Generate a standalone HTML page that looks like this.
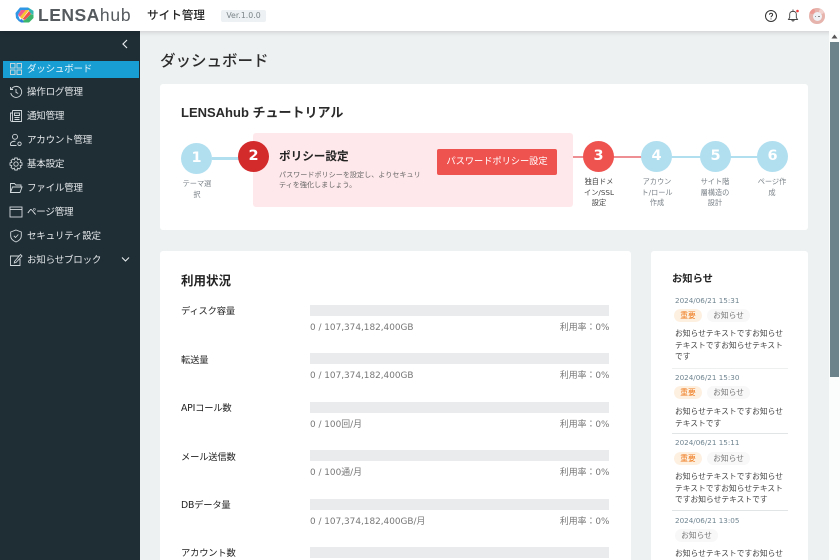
<!DOCTYPE html>
<html lang="ja"><head><meta charset="utf-8"><style>
html,body{margin:0;padding:0;width:840px;height:560px;overflow:hidden;background:#eef1f2}
body{font-family:"DejaVu Sans","Noto Sans CJK JP",sans-serif;color:#222;position:relative}
div,span,svg{position:absolute;white-space:nowrap}
.card{background:#fff;border-radius:3px}
.nav{left:27px;font-size:9.5px;color:#e6eaec;line-height:14px;letter-spacing:-.2px}
.ic{left:9px;width:14px;height:14px;fill:none;stroke:#d3dadd;stroke-width:.9}
.c{width:31px;height:31px;border-radius:50%;text-align:center;line-height:31px;font-weight:bold;font-size:14.5px;color:#fff;background:#b1dff0}
.l{font-size:7.2px;color:#7a8288;line-height:10.6px;text-align:center;white-space:normal;width:40px}
.k{left:181px;font-size:9.3px;line-height:14px;color:#222;letter-spacing:-.2px}
.b{left:310px;width:299px;height:10.5px;background:#e9ebec}
.u{left:310px;font-size:8.9px;line-height:12px;color:#777}
.r{left:509px;width:100.5px;text-align:right;font-size:8.9px;line-height:12px;color:#777}
.d{left:675px;font-size:7.2px;color:#6f8490;line-height:10px}
.t{height:13px;border-radius:7px;font-size:7.75px;line-height:13px;text-align:center}
.o{left:674px;width:28px;background:#fdf0e1;color:#ee7a1d}
.g{width:43px;background:#f8f8f8;color:#777}
.x{left:675px;width:118px;font-size:7.75px;line-height:11.7px;color:#444}
.h{left:672px;width:116px;height:1px;background:#e2e5e6}
</style></head><body>

<div style="left:0;top:31px;width:140px;height:529px;background:#1f2d35"></div>
<div style="left:0;top:0;width:840px;height:31px;background:#fff;box-shadow:0 1px 5px rgba(0,0,0,.16)"></div>

<svg style="left:15px;top:7px" width="19" height="16" viewBox="0 0 19 16">
<path d="M5 0.500H13L18.500 4V6L13 3H6L3 8L5 13L4.500 15L1 11L0.500 6Z" fill="#2f97e6"/>
<path d="M13 0.500L18.500 4V8L15 6Z" fill="#33b7b0"/>
<path d="M6 3H11L5 10L3 8Z" fill="#f25c8a"/>
<path d="M11 3H14L7 12L5 10Z" fill="#f7c52e"/>
<path d="M14 4L16 7L10 13L7.500 12Z" fill="#ef5350"/>
<path d="M16 7L18.500 8V11L14 15.500H6L4.500 14L10 13Z" fill="#3bb56c"/>
<path d="M4 13L7 12L9 15.500H6Z" fill="#2f7fe0"/>
</svg>
<div style="left:38px;top:5px;font-family:'Liberation Sans',sans-serif;font-size:17.5px;line-height:21px;color:#555a5e;font-weight:bold;letter-spacing:.5px">LENSA<span style="position:static;font-weight:normal;letter-spacing:.8px">hub</span></div>
<div style="left:147px;top:7px;font-size:11.6px;line-height:17px;color:#222;font-weight:500;font-family:'Noto Sans CJK JP',sans-serif">サイト管理</div>
<div style="left:221px;top:9.500px;width:45px;height:12px;background:#edf1f3;border-radius:2px;font-size:7.8px;line-height:12px;text-align:center;color:#7c858a">Ver.1.0.0</div>

<svg style="left:764px;top:9px" width="14" height="14" viewBox="0 0 14 14" fill="none" stroke="#333" stroke-width="1"><circle cx="7" cy="7" r="5.500"/><path d="M5.500 5.700C5.500 3.800 8.600 3.800 8.600 5.700C8.600 7 7 6.900 7 8.300M7 9.500V10.400"/></svg>
<svg style="left:786px;top:8px" width="16" height="16" viewBox="0 0 16 16" fill="none" stroke="#444" stroke-width=".9"><path d="M2.500 11.500H11.500L10.300 9.500V6C10.300 2.500 3.700 2.500 3.700 6V9.500ZM7 3V1.500M5.800 11.500C5.800 13.500 8.200 13.500 8.200 11.500"/><circle cx="11.500" cy="3" r="1.300" fill="#ee3b3b" stroke="none"/></svg>
<div style="left:809px;top:8px;width:15.500px;height:15.500px;border-radius:50%;background:#e6b4ad;overflow:hidden"><div style="left:0;top:0;width:6px;height:6px;background:#ee9a94;border-radius:50%"></div><div style="left:10px;top:1px;width:5px;height:5px;background:#f3d3cf;border-radius:50%"></div><div style="left:3.500px;top:4px;width:9px;height:9px;border-radius:50%;background:#eef0f4"></div><div style="left:5.500px;top:7.500px;width:1.500px;height:1.500px;background:#777;border-radius:50%"></div><div style="left:9px;top:7.500px;width:1.500px;height:1.500px;background:#777;border-radius:50%"></div></div>

<svg style="left:121px;top:39px" width="8" height="10" viewBox="0 0 8 10" fill="none" stroke="#e8ecee" stroke-width="1.200"><path d="M6 1L2 5L6 9"/></svg>

<div style="left:3px;top:60.500px;width:136px;height:17px;background:#189ed3"></div>
<svg class="ic" style="top:62px" viewBox="0 0 14 14"><rect x="1.500" y="1.500" width="4.500" height="4.500"/><rect x="8" y="1.500" width="4.500" height="4.500"/><rect x="1.500" y="8" width="4.500" height="4.500"/><rect x="8" y="8" width="4.500" height="4.500"/></svg>
<div class="nav" style="top:62.500px;color:#e8f5fb">ダッシュボード</div>

<svg class="ic" style="top:85px" viewBox="0 0 14 14"><path d="M2.500 4A5.500 5.500 0 1 1 1.800 8M1.500 2V4.500H4M7 4V7.300L9.200 8.500"/></svg>
<div class="nav" style="top:86px">操作ログ管理</div>

<svg class="ic" style="top:109px" viewBox="0 0 14 14"><path d="M3.500 1.500H12.500V12.500H3.500C2.500 12.500 1.500 12 1.500 11V4H3.500M3.500 1.500V12M5.500 4H10.500V6.500H5.500ZM5.500 8.500H10.500M5.500 10.500H10.500"/></svg>
<div class="nav" style="top:110px">通知管理</div>

<svg class="ic" style="top:133px" viewBox="0 0 14 14"><circle cx="6" cy="3.800" r="2.500"/><path d="M1.500 12.500V11C1.500 9 4 8 6.500 8.300M1.500 12.500H7.500"/><circle cx="10.500" cy="10.800" r="1.700"/></svg>
<div class="nav" style="top:134px">アカウント管理</div>

<svg class="ic" style="top:157px" viewBox="0 0 14 14"><circle cx="7" cy="7" r="2.200"/><path d="M5.800 1H8.200L8.700 2.800L10.300 2L12 3.700L11.200 5.300L13 5.800V8.200L11.200 8.700L12 10.300L10.300 12L8.700 11.200L8.200 13H5.800L5.300 11.200L3.700 12L2 10.300L2.800 8.700L1 8.200V5.800L2.800 5.300L2 3.700L3.700 2L5.300 2.800Z"/></svg>
<div class="nav" style="top:158px">基本設定</div>

<svg class="ic" style="top:181px" viewBox="0 0 14 14"><path d="M1.500 11.500V2.500H5.500L6.800 4H12V6M1.500 11.500H11L13 6H3.500Z"/></svg>
<div class="nav" style="top:182px">ファイル管理</div>

<svg class="ic" style="top:205px" viewBox="0 0 14 14"><rect x="1" y="2" width="12" height="10"/><path d="M1 4.500H13"/></svg>
<div class="nav" style="top:206px">ページ管理</div>

<svg class="ic" style="top:229px" viewBox="0 0 14 14"><path d="M7 1L12.300 3V7C12.300 10 9.500 12 7 13C4.500 12 1.700 10 1.700 7V3Z"/><path d="M4.800 6.800L6.500 8.500L9.300 5.500"/></svg>
<div class="nav" style="top:230px">セキュリティ設定</div>

<svg class="ic" style="top:253px" viewBox="0 0 14 14"><path d="M10 3H1.500V12.500H11V6M5.500 8.500L11.500 1.500L13 3L7 9.500L5.300 10Z"/></svg>
<div class="nav" style="top:254px">お知らせブロック</div>
<svg style="left:121px;top:256px" width="9" height="7" viewBox="0 0 9 7" fill="none" stroke="#e8ecee" stroke-width="1.100"><path d="M1 1.500L4.500 5L8 1.500"/></svg>

<div style="left:160px;top:49px;font-size:15.500px;line-height:22px;color:#2c2c2c;font-weight:500;font-family:'Noto Sans CJK JP',sans-serif">ダッシュボード</div>

<div class="card" style="left:160px;top:84px;width:648px;height:146px"></div>
<div style="left:181px;top:104px;font-size:13px;line-height:18px;font-weight:bold;color:#2a2a2a;font-family:'Liberation Sans','Noto Sans CJK JP',sans-serif">LENSAhub チュートリアル</div>

<div style="left:253px;top:133px;width:320px;height:74px;background:#ffe8eb;border-radius:3px"></div>
<div style="left:212px;top:157px;width:28px;height:2.500px;background:#b1dff0"></div>
<div style="left:573px;top:156px;width:15px;height:2px;background:#ee8f93"></div>
<div style="left:610px;top:156px;width:34px;height:2px;background:#ee8f93"></div>
<div style="left:668px;top:156px;width:34px;height:2px;background:#b1dff0"></div>
<div style="left:726px;top:156px;width:34px;height:2px;background:#b1dff0"></div>

<div class="c" style="left:181px;top:143px">1</div>
<div class="c" style="left:238px;top:141px;background:#d32a2c">2</div>
<div class="c" style="left:583px;top:141px;background:#ef5350">3</div>
<div class="c" style="left:641px;top:141px">4</div>
<div class="c" style="left:700px;top:141px">5</div>
<div class="c" style="left:757px;top:141px">6</div>

<div class="l" style="left:177px;top:179px">テーマ選<br>択</div>
<div class="l" style="left:579px;top:177px;color:#444">独自ドメ<br>イン/SSL<br>設定</div>
<div class="l" style="left:637px;top:177px">アカウン<br>ト/ロール<br>作成</div>
<div class="l" style="left:695px;top:177px">サイト階<br>層構造の<br>設計</div>
<div class="l" style="left:752px;top:177px">ページ作<br>成</div>

<div style="left:279px;top:148px;font-size:11.600px;line-height:16px;font-weight:bold;color:#222;font-family:'Noto Sans CJK JP',sans-serif">ポリシー設定</div>
<div style="left:279px;top:169.500px;font-size:7.100px;line-height:10.700px;color:#666">パスワードポリシーを設定し、よりセキュリ<br>ティを強化しましょう。</div>
<div style="left:437px;top:148.500px;width:120px;height:26.500px;background:#ef5350;border-radius:2px;color:#fff;font-size:9.300px;line-height:26px;text-align:center;letter-spacing:-.1px">パスワードポリシー設定</div>

<div class="card" style="left:160px;top:251px;width:471px;height:320px"></div>
<div style="left:181px;top:271px;font-size:12.500px;line-height:17px;font-weight:bold;color:#222;font-family:'Noto Sans CJK JP',sans-serif">利用状況</div>

<div class="k" style="top:305px">ディスク容量</div><div class="b" style="top:305px"></div><div class="u" style="top:322px">0 / 107,374,182,400GB</div><div class="r" style="top:322px">利用率：0%</div>
<div class="k" style="top:354px">転送量</div><div class="b" style="top:353px"></div><div class="u" style="top:370px">0 / 107,374,182,400GB</div><div class="r" style="top:370px">利用率：0%</div>
<div class="k" style="top:402px">APIコール数</div><div class="b" style="top:402px"></div><div class="u" style="top:419px">0 / 100回/月</div><div class="r" style="top:419px">利用率：0%</div>
<div class="k" style="top:450.500px">メール送信数</div><div class="b" style="top:450px"></div><div class="u" style="top:467px">0 / 100通/月</div><div class="r" style="top:467px">利用率：0%</div>
<div class="k" style="top:499px">DBデータ量</div><div class="b" style="top:499px"></div><div class="u" style="top:516px">0 / 107,374,182,400GB/月</div><div class="r" style="top:516px">利用率：0%</div>
<div class="k" style="top:547px">アカウント数</div><div class="b" style="top:547px"></div>

<div class="card" style="left:651px;top:251px;width:157px;height:320px"></div>
<div style="left:672px;top:269.500px;font-size:10.300px;line-height:16px;font-weight:bold;color:#222;font-family:'Noto Sans CJK JP',sans-serif">お知らせ</div>

<div class="d" style="top:295.500px">2024/06/21 15:31</div>
<div class="t o" style="top:309px">重要</div><div class="t g" style="left:707px;top:309px">お知らせ</div>
<div class="x" style="top:328px">お知らせテキストですお知らせ<br>テキストですお知らせテキスト<br>です</div>
<div class="h" style="top:368px;background:#eef0f0"></div>

<div class="d" style="top:373px">2024/06/21 15:30</div>
<div class="t o" style="top:386px">重要</div><div class="t g" style="left:707px;top:386px">お知らせ</div>
<div class="x" style="top:406px">お知らせテキストですお知らせ<br>テキストです</div>
<div class="h" style="top:433px"></div>

<div class="d" style="top:438px">2024/06/21 15:11</div>
<div class="t o" style="top:452px">重要</div><div class="t g" style="left:707px;top:452px">お知らせ</div>
<div class="x" style="top:471px">お知らせテキストですお知らせ<br>テキストですお知らせテキスト<br>ですお知らせテキストです</div>
<div class="h" style="top:510px"></div>

<div class="d" style="top:516px">2024/06/21 13:05</div>
<div class="t g" style="left:675px;top:529px">お知らせ</div>
<div class="x" style="top:548px">お知らせテキストですお知らせ</div>

<div style="left:829px;top:31px;width:11px;height:529px;background:#fbfcfc"></div>
<div style="left:830px;top:42px;width:9px;height:335px;background:#6c838c"></div>
<svg style="left:831px;top:34px" width="7" height="5" viewBox="0 0 7 5"><path d="M3.500 0.500L6.500 4.500H0.500Z" fill="#555"/></svg>

</body></html>
